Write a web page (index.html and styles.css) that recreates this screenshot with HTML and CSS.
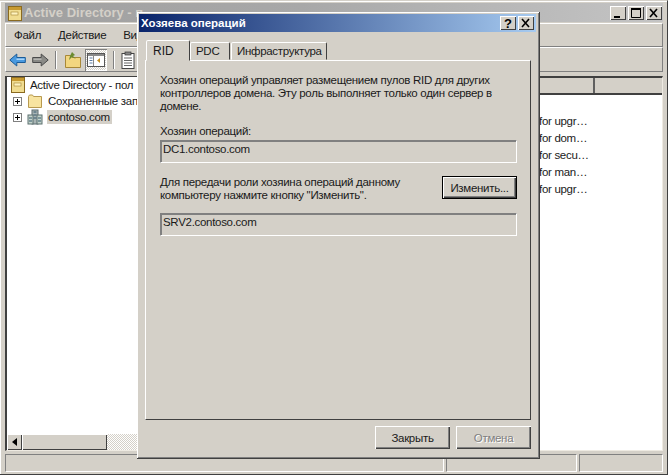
FILE: index.html
```html
<!DOCTYPE html>
<html lang="ru">
<head>
<meta charset="utf-8">
<title>Хозяева операций</title>
<link rel="stylesheet" href="styles.css">
</head>
<body>
<div class="desktop">
  <div class="window">
    <div class="titlebar">
      <svg class="title-icon" width="16" height="16" viewBox="0 0 16 16"><rect x="1.500" y="1.500" width="13" height="14" fill="#f0dc90" stroke="#8a6a20"/><rect x="2" y="2" width="12" height="3" fill="#c89a30"/><rect x="4" y="7" width="7" height="3" fill="#fff4c0" stroke="#a08030" stroke-width=".6"/></svg>
      <span class="title-text">Active Directory - п</span>
      <div class="win-controls">
        <span class="cap-btn"><svg width="14" height="12" viewBox="0 0 14 12"><rect x="3" y="9" width="6" height="2" fill="#000"/></svg></span>
        <span class="cap-btn"><svg width="14" height="12" viewBox="0 0 14 12"><path d="M2.500 1.500h9v9h-9z" fill="none" stroke="#000"/><rect x="2" y="1" width="10" height="2" fill="#000"/></svg></span>
        <span class="cap-btn"><svg width="14" height="12" viewBox="0 0 14 12"><path d="M3 2l7 8M10 2l-7 8" stroke="#000" stroke-width="1.600"/></svg></span>
      </div>
    </div>
    <div class="menubar">
      <span class="menu-item">Файл</span>
      <span class="menu-item">Действие</span>
      <span class="menu-item">Вид</span>
    </div>
    <div class="toolbar">
      <svg class="tool tool-back" width="17" height="16" viewBox="0 0 17 16"><path d="M.8 8l7-6v3.500h8.500v5H7.800V14z" fill="#4a9ae0" stroke="#1c5c98"/><path d="M7.500 6.500h8V8h-8z" fill="#a8d4f8"/></svg>
      <svg class="tool tool-fwd" width="17" height="16" viewBox="0 0 17 16"><path d="M16.200 8l-7-6v3.500H.7v5h8.500V14z" fill="#8a8a86" stroke="#4a4a4a"/><path d="M1.500 6.500h8V8h-8z" fill="#b4b4b0"/></svg>
      <span class="tool-sep tool-sep-a"></span>
      <svg class="tool tool-up" width="16" height="18" viewBox="0 0 16 18"><path d="M.5 4.500h5l1.500 2h8.500v10H.5z" fill="#f2d680" stroke="#a88838"/><path d="M7 1l3 3-2 1 3 3-4-2-3 3 1-4z" fill="#6a8a30"/></svg>
      <span class="tool-pressed"><svg width="18" height="16" viewBox="0 0 18 16"><rect x=".5" y="1.500" width="17" height="13" fill="#fff" stroke="#555"/><rect x="1" y="2" width="16" height="2" fill="#8a8a8a"/><path d="M6.500 4v10" stroke="#888"/><path d="M2.500 6h3M2.500 8.500h3M2.500 11h3" stroke="#5c7ca4"/><path d="M13 6v5l-3-2.500z" fill="#c89020"/></svg></span>
      <span class="tool-sep tool-sep-b"></span>
      <svg class="tool tool-clip" width="14" height="18" viewBox="0 0 14 18"><rect x="1" y="2.500" width="12" height="15" fill="#fff" stroke="#444"/><rect x="4" y="1" width="6" height="3" fill="#888" stroke="#333" stroke-width=".7"/><path d="M3 7h8M3 9.500h8M3 12h8M3 14.500h8" stroke="#666"/></svg>
    </div>
    <div class="content">
      <div class="tree-pane">
        <ul class="tree">
          <li class="tree-row tree-root">
            <svg width="16" height="16" viewBox="0 0 16 16"><rect x="1.500" y=".5" width="13" height="15" fill="#f0dc90" stroke="#8a6a20"/><rect x="2" y="1" width="12" height="3" fill="#c89a30"/><rect x="4" y="6" width="7" height="3" fill="#fff4c0" stroke="#a08030" stroke-width=".6"/></svg>
            <span class="tree-label">Active Directory - пол</span>
          </li>
          <li class="tree-row">
            <span class="expander"></span>
            <svg width="16" height="16" viewBox="0 0 16 16"><path d="M1.500 3.500l1-1.500h3l1 1.500h8v11h-13z" fill="#f8e4a0" stroke="#b89a50"/></svg>
            <span class="tree-label">Сохраненные зап</span>
          </li>
          <li class="tree-row">
            <span class="expander"></span>
            <svg width="16" height="16" viewBox="0 0 16 16"><rect x="5" y="1" width="6" height="14" fill="#a8b4b4" stroke="#5c6c70"/><rect x="1" y="6" width="5" height="9" fill="#c4d4cc" stroke="#5c7070"/><rect x="10" y="6" width="5" height="9" fill="#c4d4cc" stroke="#5c7070"/><path d="M6.500 3h3M6.500 6h3M6.500 9h3M2 9h3M11 9h3M2 12h3M11 12h3" stroke="#34586c"/></svg>
            <span class="tree-label is-selected">contoso.com</span>
          </li>
        </ul>
        <div class="hscroll">
          <span class="scroll-btn"><svg width="5" height="8" viewBox="0 0 5 8"><path d="M5 0v8L0 4z" fill="#000"/></svg></span>
          <span class="scroll-thumb"></span>
          <span class="scroll-track"></span>
        </div>
      </div>
      <div class="list-pane">
        <div class="list-header">
          <span class="col-a"></span>
          <span class="col-b"></span>
        </div>
        <ul class="list">
          <li class="list-row">for upgr…</li>
          <li class="list-row">for dom…</li>
          <li class="list-row">for secu…</li>
          <li class="list-row">for man…</li>
          <li class="list-row">for upgr…</li>
        </ul>
      </div>
    </div>
    <div class="statusbar">
      <span class="status-cell status-main"></span>
      <span class="status-cell status-mid"></span>
      <span class="status-cell status-end"></span>
    </div>
  </div>

  <div class="dialog">
    <div class="dialog-title">
      <span class="dialog-title-text">Хозяева операций</span>
      <span class="cap-btn dlg-help">?</span>
      <span class="cap-btn"><svg width="14" height="12" viewBox="0 0 14 12"><path d="M3 2l7 8M10 2l-7 8" stroke="#000" stroke-width="1.600"/></svg></span>
    </div>
    <div class="tabs">
      <span class="tab tab-active">RID</span>
      <span class="tab tab-pdc">PDC</span>
      <span class="tab tab-infra">Инфраструктура</span>
    </div>
    <div class="panel">
      <p class="intro">Хозяин операций управляет размещением пулов RID для других контроллеров домена. Эту роль выполняет только один сервер в домене.</p>
      <label class="field-label">Хозяин операций:</label>
      <div class="readonly-field">DC1.contoso.com</div>
      <div class="transfer">
        <p class="transfer-text">Для передачи роли хозяина операций данному компьютеру нажмите кнопку "Изменить".</p>
        <button class="btn btn-default" type="button">Изменить...</button>
      </div>
      <div class="readonly-field">SRV2.contoso.com</div>
    </div>
    <div class="dialog-actions">
      <button class="btn btn-action" type="button">Закрыть</button>
      <button class="btn btn-action" type="button" disabled>Отмена</button>
    </div>
  </div>
</div>
</body>
</html>
```

FILE: styles.css
```css
* { box-sizing: border-box; }
html, body { margin: 0; padding: 0; }
ul { list-style: none; margin: 0; padding: 0; }
p { margin: 0; }

.desktop {
  position: relative;
  width: 668px;
  height: 475px;
  overflow: hidden;
  background: #d4d0c8;
  font-family: "Liberation Sans", Arial, sans-serif;
  font-size: 11.5px;
  letter-spacing: -0.3px;
  color: #1a1a1a;
}

.window {
  display: flex;
  flex-direction: column;
  width: 668px;
  height: 475px;
  padding: 2px 4px 2px 5px;
  background: #d4d0c8;
  border-top: 1px solid #d4d0c8;
  border-bottom: 1px solid #404040;
  border-right: 1px solid #404040;
  box-shadow: inset 1px 1px 0 #fff;
}

.titlebar {
  display: flex;
  align-items: center;
  flex: none;
  height: 19px;
  padding: 0 1px 0 2px;
  background: linear-gradient(90deg, #a0a0a0 0%, #a8a8a8 45%, #c4c4c4 100%);
}
.title-icon { flex: none; margin-right: 1px; }
.title-text {
  flex: 1;
  overflow: hidden;
  white-space: nowrap;
  font-weight: bold;
  font-size: 13px;
  letter-spacing: 0;
  color: #d4d0c8;
}
.win-controls { display: flex; gap: 2px; flex: none; }
.cap-btn {
  display: flex;
  align-items: center;
  justify-content: center;
  flex: none;
  width: 16px;
  height: 14px;
  background: #d4d0c8;
  box-shadow: inset 1px 1px 0 #fff, inset -1px -1px 0 #404040;
}

.menubar {
  display: flex;
  align-items: center;
  flex: none;
  height: 24px;
  margin-top: 1px;
  padding-left: 8px;
  gap: 17px;
  border: 1px solid;
  border-color: #fff #808080 #808080 #fff;
}

.toolbar {
  display: flex;
  align-items: center;
  flex: none;
  height: 25px;
  border: 1px solid;
  border-color: #fff #808080 #808080 #fff;
}
.tool { flex: none; }
.tool-back { margin-left: 3px; }
.tool-fwd { margin-left: 6px; }
.tool-up { margin-left: 8px; }
.tool-clip { margin-left: 6px; }
.tool-sep {
  flex: none;
  width: 2px;
  height: 18px;
  border-left: 1px solid #808080;
  border-right: 1px solid #fff;
}
.tool-sep-a { margin-left: 6px; }
.tool-sep-b { margin-left: 6px; }
.tool-pressed {
  display: flex;
  align-items: center;
  justify-content: center;
  flex: none;
  width: 22px;
  height: 22px;
  margin-left: 4px;
  background: repeating-conic-gradient(#d4d0c8 0 25%, #fff 0 50%) 0 0 / 2px 2px;
  box-shadow: inset 1px 1px 0 #808080, inset -1px -1px 0 #fff;
}

.content {
  display: flex;
  flex: 1;
  min-height: 0;
  margin-top: 4px;
}
.tree-pane {
  display: flex;
  flex-direction: column;
  width: 135px;
  flex: none;
  background: #fff;
  border-top: 1px solid #404040;
  border-left: 2px solid #404040;
  border-bottom: 1px solid #eeeae2;
}
.tree { flex: 1; min-height: 0; }
.tree-row {
  display: flex;
  align-items: center;
  height: 16px;
  padding-left: 6px;
  gap: 4px;
  white-space: nowrap;
  overflow: hidden;
}
.tree-row svg { flex: none; }
.tree-root { padding-left: 3px; gap: 3px; }
.expander {
  flex: none;
  width: 9px;
  height: 9px;
  margin-right: 1px;
  background:
    linear-gradient(#000, #000) center / 5px 1px no-repeat,
    linear-gradient(#000, #000) center / 1px 5px no-repeat,
    #fff;
  border: 1px solid #808080;
}
.tree-label { padding: 1px; }
.is-selected { background: #d4d0c8; padding-right: 2px; }

.hscroll {
  display: flex;
  flex: none;
  height: 16px;
  background: #d4d0c8;
}
.scroll-btn {
  display: flex;
  align-items: center;
  justify-content: center;
  flex: none;
  width: 15px;
  background: #d4d0c8;
  box-shadow: inset 1px 1px 0 #fff, inset -1px -1px 0 #404040;
}
.scroll-thumb {
  flex: none;
  width: 85px;
  background: #d4d0c8;
  box-shadow: inset 1px 1px 0 #fff, inset -1px -1px 0 #404040;
}
.scroll-track {
  flex: 1;
  background: repeating-conic-gradient(#d4d0c8 0 25%, #fff 0 50%) 0 0 / 2px 2px;
}

.list-pane {
  display: flex;
  flex-direction: column;
  flex: 1;
  min-width: 0;
  background: #fff;
  border-right: 1px solid #eeeae2;
  border-bottom: 1px solid #eeeae2;
  border-top: 2px solid #404040;
}
.list-header {
  display: flex;
  flex: none;
  height: 17px;
  background: #d4d0c8;
  border-bottom: 2px solid #404040;
}
.col-a { width: 455px; border-right: 2px solid #606060; }
.col-b { flex: 1; }
.list { padding: 18px 0 0 399px; }
.list-row {
  height: 17px;
  line-height: 17px;
  white-space: nowrap;
}

.statusbar {
  display: flex;
  flex: none;
  height: 18px;
  gap: 2px;
  margin-top: 3px;
}
.status-cell {
  display: block;
  border: 1px solid;
  border-color: #808080 #fff #fff #808080;
}
.status-main { width: 439px; }
.status-mid { width: 131px; }
.status-end { flex: 1; }

.dialog {
  position: absolute;
  left: 137px;
  top: 12px;
  width: 403px;
  height: 447px;
  display: flex;
  flex-direction: column;
  padding: 2px 3px 3px 2px;
  background: #d4d0c8;
  border-right: 1px solid #404040;
  border-bottom: 1px solid #404040;
  box-shadow: inset 1px 1px 0 #fff, inset -1px -1px 0 #808080;
}
.dialog-title {
  display: flex;
  align-items: center;
  flex: none;
  gap: 2px;
  height: 18px;
  padding: 0 2px;
  background: linear-gradient(90deg, #0a246a 0%, #a6caf0 100%);
}
.dialog-title-text {
  flex: 1;
  font-weight: bold;
  font-size: 11.5px;
  letter-spacing: 0;
  color: #fff;
  white-space: nowrap;
}
.dlg-help { font-weight: bold; font-size: 13px; letter-spacing: 0; color: #000; }

.tabs {
  display: flex;
  align-items: flex-end;
  flex: none;
  height: 20px;
  margin-top: 8px;
  padding-left: 7px;
  position: relative;
  z-index: 1;
}
.tab {
  display: flex;
  align-items: center;
  height: 18px;
  padding-left: 5px;
  background: #d4d0c8;
  border: 1px solid;
  border-color: #fff #404040 transparent #fff;
  border-radius: 2px 2px 0 0;
}
.tab-active {
  height: 21px;
  width: 44px;
  margin-bottom: -1px;
  padding-left: 6px;
  font-size: 12px;
  letter-spacing: 0;
}
.tab-pdc { width: 40px; margin-left: 0; }
.tab-infra { width: 96px; margin-left: 1px; }

.panel {
  flex: none;
  height: 360px;
  width: 386px;
  margin-left: 6px;
  padding: 13px 13px 0 14px;
  border: 1px solid;
  border-color: #fff #404040 #404040 #fff;
}
.intro { line-height: 13px; }
.field-label { display: block; margin-top: 11px; line-height: 14px; }
.readonly-field {
  height: 23px;
  margin-top: 2px;
  padding: 1px 0 0 2px;
  line-height: 15px;
  border: 1px solid;
  border-color: #808080 #fff #fff #808080;
  box-shadow: inset 1px 1px 0 #808080;
}
.transfer {
  display: flex;
  justify-content: space-between;
  align-items: flex-start;
  margin: 13px 0 11px;
}
.transfer-text { width: 270px; line-height: 13px; }
.btn {
  flex: none;
  font-family: inherit;
  font-size: 11.5px;
  letter-spacing: -0.3px;
  color: #1a1a1a;
  background: #d4d0c8;
  padding: 0;
  border: 0;
  box-shadow: inset 1px 1px 0 #fff, inset -1px -1px 0 #404040, inset -2px -2px 0 #808080;
}
.btn-default {
  width: 75px;
  height: 23px;
  border: 1px solid #000;
}
.dialog-actions {
  display: flex;
  justify-content: flex-end;
  flex: none;
  gap: 6px;
  margin-top: 6px;
  padding-right: 5px;
}
.btn-action { width: 75px; height: 23px; }
.btn-action:disabled { color: #808080; text-shadow: 1px 1px 0 #fff; }
```
